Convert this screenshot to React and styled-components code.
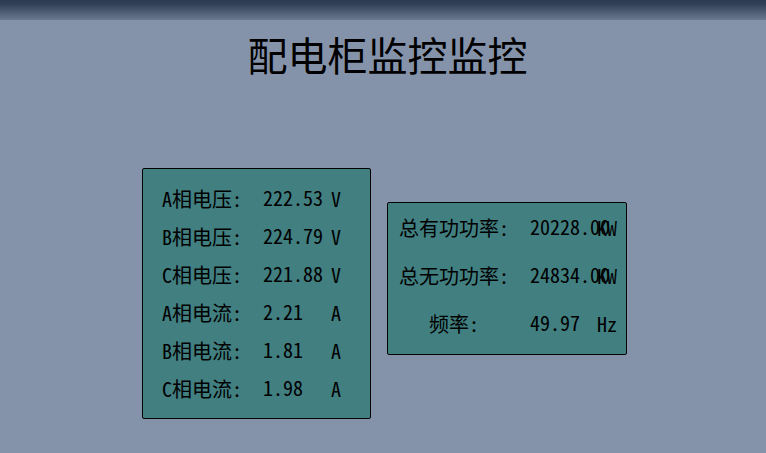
import React from "react";
import styled, { createGlobalStyle } from "styled-components";

const GlobalStyle = createGlobalStyle`
  * {
    box-sizing: border-box;
  }
  body {
    margin: 0;
    background: #8593aa;
    color: #000;
    font-family: "Noto Sans CJK SC", sans-serif;
    font-feature-settings: "hwid" 1;
  }
`;

const TopBar = styled.header`
  height: 20px;
  background: linear-gradient(#2b3a52, #313f57 20%, #6b7990);
`;

const Main = styled.main`
  padding: 0 8px 32px 11px;
`;

const Title = styled.h1`
  margin: 4px 0 0;
  padding-left: 6px;
  font-size: 40px;
  font-weight: 400;
  line-height: 60px;
  text-align: center;
`;

const Panels = styled.div`
  display: flex;
  justify-content: center;
  align-items: flex-start;
  gap: 16px;
  margin-top: 84px;
`;

const Panel = styled.section`
  flex: none;
  width: ${({ $wide }) => ($wide ? 240 : 229)}px;
  margin-top: ${({ $wide }) => ($wide ? 34 : 0)}px;
  padding: ${({ $wide }) => ($wide ? "1px 8px 6px 10px" : "11px 28px 10px 19px")};
  border: 1px solid #000;
  border-radius: 2px;
  background: #417f80;
`;

const Readings = styled.table`
  width: 100%;
  table-layout: fixed;
  border-collapse: collapse;
  font-size: 20px;
  line-height: 20px;
`;

const Row = styled.tr`
  height: ${({ $tall }) => ($tall ? 48 : 38)}px;
`;

const Label = styled.th`
  width: ${({ $wide }) => ($wide ? 132 : 101)}px;
  padding: 0 20px 0 0;
  font-weight: 400;
  text-align: ${({ $wide }) => ($wide ? "center" : "left")};
  white-space: nowrap;
`;

const Value = styled.td`
  width: ${({ $wide }) => ($wide ? 67 : 68)}px;
  padding: 0 0 2px;
  white-space: nowrap;
`;

const Unit = styled.td`
  padding: 0;
  white-space: nowrap;
`;

const phases = [
  ["A相电压:", "222.53", "V"],
  ["B相电压:", "224.79", "V"],
  ["C相电压:", "221.88", "V"],
  ["A相电流:", "2.21", "A"],
  ["B相电流:", "1.81", "A"],
  ["C相电流:", "1.98", "A"],
];

const totals = [
  ["总有功功率:", "20228.00", "KW"],
  ["总无功功率:", "24834.00", "KW"],
  ["频率:", "49.97", "Hz"],
];

function ReadingPanel({ rows, wide = false }) {
  return (
    <Panel $wide={wide}>
      <Readings>
        <tbody>
          {rows.map(([label, value, unit]) => (
            <Row key={label} $tall={wide}>
              <Label scope="row" $wide={wide}>{label}</Label>
              <Value $wide={wide}>{value}</Value>
              <Unit>{unit}</Unit>
            </Row>
          ))}
        </tbody>
      </Readings>
    </Panel>
  );
}

export default function App() {
  return (
    <>
      <GlobalStyle />
      <TopBar />
      <Main>
        <Title>配电柜监控监控</Title>
        <Panels>
          <ReadingPanel rows={phases} />
          <ReadingPanel rows={totals} wide />
        </Panels>
      </Main>
    </>
  );
}
